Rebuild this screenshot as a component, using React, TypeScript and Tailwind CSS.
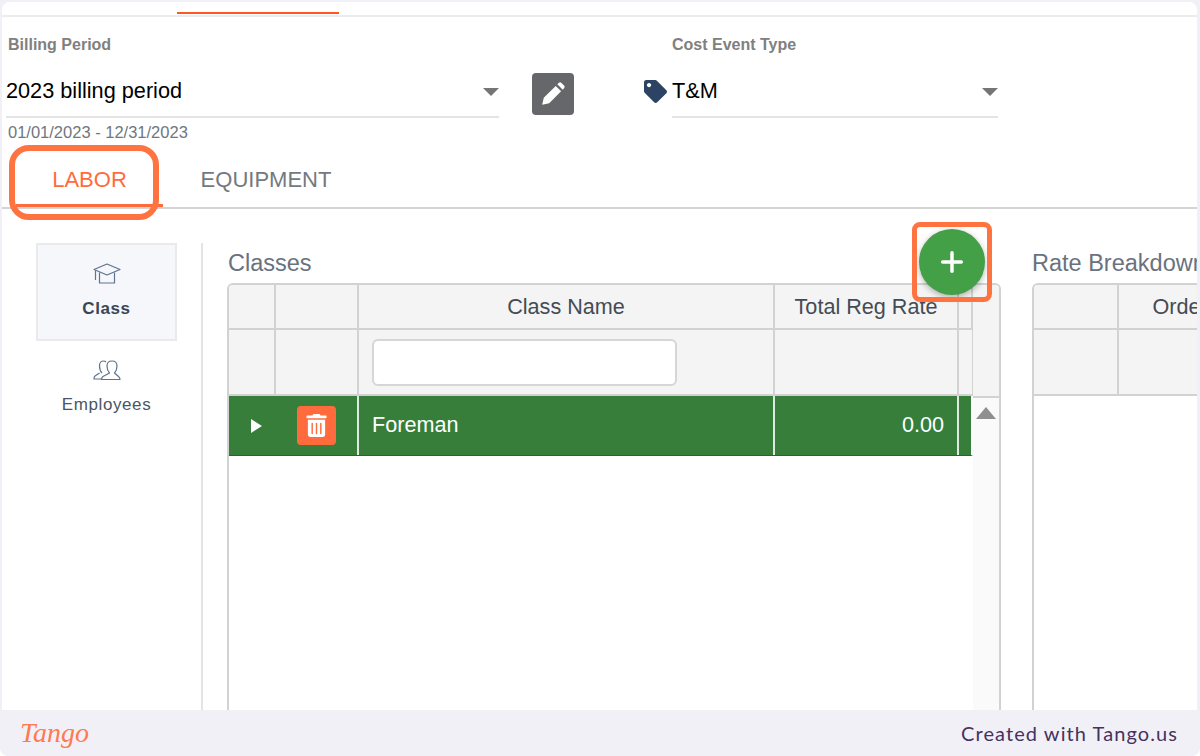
import { FaTag, FaTrashAlt } from "react-icons/fa";
import { Plus } from "lucide-react";

const font = "font-['Liberation_Sans',Arial,sans-serif]";

function Caret() {
    return <div className="w-0 h-0 border-x-[8px] border-x-transparent border-t-[8px] border-t-[#757575]" />;
}

function PencilIcon() {
    return (
        <svg width="26" height="26" viewBox="0 0 24 24" fill="white">
            <path d="M2 22 L3.5 15.5 L14.5 4.5 L19.5 9.5 L8.5 20.5 Z" />
            <path d="M16 3 L17.5 1.6 Q18.6 0.8 19.8 1.8 L22.2 4.2 Q23.2 5.4 22.4 6.5 L21 8 Z" />
        </svg>
    );
}

function CapIcon() {
    return (
        <svg width="28" height="24" viewBox="0 0 28 24" fill="none" stroke="#5d7390" strokeWidth="1.2" strokeLinejoin="round">
            <path d="M14 2 L27 7.5 L14 13 L1 7.5 Z" />
            <path d="M6.5 10.5 V21 H21.5 V10.5" />
            <path d="M2.5 8.5 V18" />
        </svg>
    );
}

function PeopleIcon() {
    return (
        <svg width="28" height="22" viewBox="0 0 28 22" fill="none" stroke="#5d7390" strokeWidth="1.2" strokeLinejoin="round">
            <path d="M9 14 C7 12 6.5 9 6.5 6.5 C6.5 3.5 8.5 2 10.5 2 C11.5 2 12.5 2.4 13 3" />
            <path d="M6.5 14 L2 17 C1 17.8 1 19 1 20 H8" />
            <path d="M19 2 C16 2 14 4 14 7 C14 10 15 12.5 16.5 14 L10 17.5 C9 18.2 8.5 19 8.5 20.5 H27 C27 19 26.5 18.2 25.5 17.5 L21.5 14 C23 12.5 24 10 24 7 C24 4 22 2 19 2 Z" />
        </svg>
    );
}

function TableHead({ cols, filter }: { cols: { w: string; label?: string; box?: boolean }[]; filter?: boolean }) {
    return (
        <>
            <div className="flex h-[45px] bg-[#f4f4f4] border-b-2 border-[#d2d2d2]">
                {cols.map((c, i) => (
                    <div key={i} className={`${c.w} shrink-0 border-r-2 border-[#d2d2d2] flex items-center justify-center pt-[2px] text-[21.6px] text-[#444b55] whitespace-nowrap`}>
                        {c.label}
                    </div>
                ))}
            </div>
            <div className="flex h-[66px] bg-[#f4f4f4] border-b-2 border-[#d2d2d2]">
                {cols.map((c, i) => (
                    <div key={i} className={`${c.w} shrink-0 border-r-2 border-[#d2d2d2] flex items-center pl-[13px]`}>
                        {filter && c.box && <div className="w-[305px] h-[47px] bg-white border-2 border-[#d6d6d6] rounded-md" />}
                    </div>
                ))}
            </div>
        </>
    );
}

export default function App() {
    const classCols = [
        { w: "w-[47px]" },
        { w: "w-[83px]" },
        { w: "w-[416px]", label: "Class Name", box: true },
        { w: "w-[184px]", label: "Total Reg Rate" },
        { w: "w-[14px]" },
    ];

    return (
        <div className={`relative w-[1200px] h-[756px] bg-white flex flex-col overflow-hidden ${font}`}>
            <div className="h-[710px] bg-[#f2f0f7] pt-[2px] pl-[2px] pr-[3px] overflow-hidden">
                <div className="h-full bg-white rounded-t-lg overflow-hidden">
                    {/* top nav strip */}
                    <div className="h-[15px] pt-[10px] border-b-[2px] border-[#ececec]">
                        <div className="ml-[175px] w-[162px] h-[2px] bg-[#ff5722]" />
                    </div>

                    {/* selectors */}
                    <div className="flex pt-[18px] h-[192px] border-b-2 border-[#d4d4d4] flex-col">
                        <div className="flex">
                            <div className="w-[493px] ml-[4px]">
                                <div className="pl-[2px] text-[16px] leading-[20px] font-bold text-[#808080]">Billing Period</div>
                                <div className="mt-[20px] h-[43px] border-b-2 border-[#e4e4e4] flex items-center justify-between pb-[8px]">
                                    <span className="text-[21.7px] text-black">2023 billing period</span>
                                    <Caret />
                                </div>
                                <div className="pl-[2px] mt-[5px] text-[16.5px] leading-[18px] text-[#6f7780]">01/01/2023 - 12/31/2023</div>
                            </div>
                            <div className="ml-[33px] mt-[38px] w-[42px] h-[42px] rounded bg-[#66676b] flex items-center justify-center">
                                <PencilIcon />
                            </div>
                            <div className="ml-[98px] w-[326px]">
                                <div className="text-[16px] leading-[20px] font-bold text-[#808080]">Cost Event Type</div>
                                <div className="relative mt-[20px] h-[43px] border-b-2 border-[#e4e4e4] flex items-center justify-between pb-[8px]">
                                    <FaTag className="absolute left-[-28px] top-[5px] text-[#2c4364] text-[23px]" />
                                    <span className="text-[21.7px] text-black">T&amp;M</span>
                                    <Caret />
                                </div>
                            </div>
                        </div>
                        <div className="flex mt-auto ml-[14px]">
                            <div className="w-[147px] h-[42px] pb-[10px] border-b-[3px] border-[#ff6b3d] flex items-center justify-center text-[22px] text-[#ff6b3d]">LABOR</div>
                            <div className="w-[206px] h-[42px] pb-[10px] border-b-[3px] border-transparent flex items-center justify-center text-[22px] text-[#737980]">EQUIPMENT</div>
                        </div>
                    </div>

                    {/* body */}
                    <div className="flex pt-[34px] h-[510px]">
                        <div className="w-[201px] border-r-2 border-[#e4e4e4] pl-[34px] shrink-0">
                            <div className="w-[141px] h-[98px] bg-[#f6f7fa] border-2 border-[#eaeaee] flex flex-col items-center pt-[17px]">
                                <CapIcon />
                                <span className="mt-[13px] text-[17px] leading-[20px] font-bold tracking-[0.6px] text-[#3b4654]">Class</span>
                            </div>
                            <div className="w-[141px] flex flex-col items-center pt-[18px]">
                                <PeopleIcon />
                                <span className="mt-[14px] text-[17px] leading-[20px] tracking-[0.6px] text-[#4b5563]">Employees</span>
                            </div>
                        </div>

                        <div className="ml-[24px] w-[774px] shrink-0">
                            <div className="pl-px text-[23.5px] leading-[40px] text-[#69727e] h-[40px]">Classes</div>
                            <div className="h-[500px] border-2 border-[#d2d2d2] rounded-t-md overflow-hidden flex">
                                <div className="w-[744px] shrink-0">
                                    <TableHead cols={classCols} filter />
                                    <div className="flex h-[60px] bg-[#367e3a] text-white border-b border-[#1e6b22] border-r-2 border-r-[#fafafa]">
                                        <div className="w-[47px] flex items-center justify-center pl-[8px]">
                                            <div className="w-0 h-0 border-y-[7px] border-y-transparent border-l-[11px] border-l-white" />
                                        </div>
                                        <div className="w-[83px] border-r-2 border-[#dfe9df] flex items-center pl-[21px]">
                                            <div className="w-[39px] h-[39px] rounded bg-[#ff6b3d] flex items-center justify-center text-[23px]">
                                                <FaTrashAlt />
                                            </div>
                                        </div>
                                        <div className="w-[416px] border-r-2 border-[#dfe9df] flex items-center pl-[13px] text-[21.6px]">Foreman</div>
                                        <div className="w-[184px] border-r-2 border-[#dfe9df] flex items-center justify-end pr-[13px] text-[21.6px]">0.00</div>
                                    </div>
                                </div>
                                <div className="flex-1 flex flex-col">
                                    <div className="h-[113px] bg-[#f4f4f4] border-b-2 border-[#d2d2d2]" />
                                    <div className="flex-1 bg-[#fafafa] flex justify-center pt-[9px]">
                                        <div className="w-0 h-0 border-x-[10px] border-x-transparent border-b-[12px] border-b-[#8f8f8f]" />
                                    </div>
                                </div>
                            </div>
                        </div>

                        <div className="ml-[31px] w-[300px] shrink-0">
                            <div className="text-[23.5px] leading-[40px] text-[#69727e] h-[40px] whitespace-nowrap">Rate Breakdown</div>
                            <div className="h-[500px] border-2 border-[#d2d2d2] border-r-0 rounded-tl-md overflow-hidden">
                                <TableHead cols={[{ w: "w-[85px]" }, { w: "w-[124px]", label: "Order" }]} />
                            </div>
                        </div>
                    </div>
                </div>
            </div>

            {/* footer */}
            <div className="h-[46px] bg-[#f2f0f7] rounded-b-lg flex items-center justify-between pl-[20px] pr-[22px]">
                <span className="font-['Liberation_Serif',cursive] italic text-[28px] text-[#ff7a50]">Tango</span>
                <span className="font-['Lato',sans-serif] text-[20px] tracking-[1.08px] text-[#45325f]">Created with Tango.us</span>
            </div>

            {/* add button and tutorial highlights sit over the page */}
            <div className="absolute left-[919px] top-[229px] w-[66px] h-[66px] rounded-full bg-[#43a047] shadow-[0_2px_6px_rgba(0,0,0,0.3)] flex items-center justify-center text-white">
                <Plus size={32} strokeWidth={2.6} />
            </div>
            <div className="absolute left-[912px] top-[222px] w-[80px] h-[80px] border-[5px] border-[#ff7340] rounded-lg" />
            <div className="absolute left-[9px] top-[145px] w-[150px] h-[75px] border-[6px] border-[#ff7340] rounded-[20px]" />
        </div>
    );
}
